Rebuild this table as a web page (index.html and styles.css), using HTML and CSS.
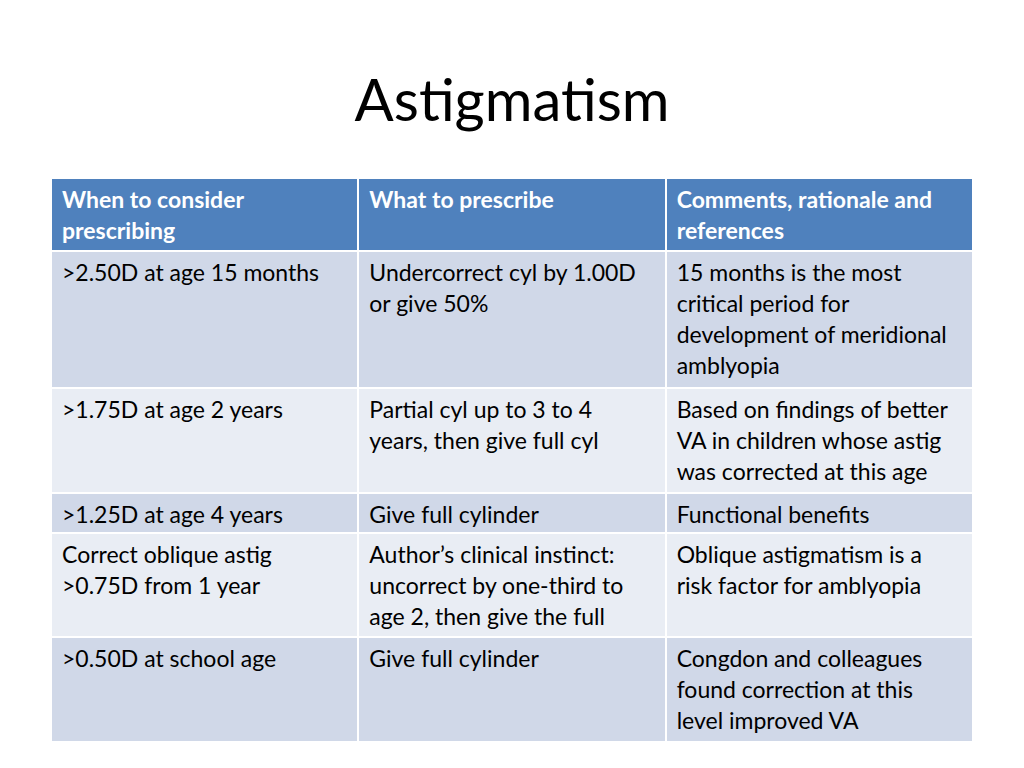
FILE: index.html
```html
<!DOCTYPE html>
<html>
<head>
<meta charset="utf-8">
<link rel="stylesheet" href="styles.css">
</head>
<body>
<div class="slide">
  <h1 class="title">Astigmatism</h1>
  <table class="grid">
    <tr class="head r-h">
      <th>When to consider<br>prescribing</th>
      <th>What to prescribe</th>
      <th>Comments, rationale and<br>references</th>
    </tr>
    <tr class="odd r1">
      <td>&gt;2.50D at age 15 months</td>
      <td>Undercorrect cyl by 1.00D<br>or give 50%</td>
      <td>15 months is the most<br>critical period for<br>development of meridional<br>amblyopia</td>
    </tr>
    <tr class="even r2">
      <td>&gt;1.75D at age 2 years</td>
      <td>Partial cyl up to 3 to 4<br>years, then give full cyl</td>
      <td>Based on findings of better<br>VA in children whose astig<br>was corrected at this age</td>
    </tr>
    <tr class="odd r3">
      <td>&gt;1.25D at age 4 years</td>
      <td>Give full cylinder</td>
      <td>Functional benefits</td>
    </tr>
    <tr class="even r4">
      <td>Correct oblique astig<br>&gt;0.75D from 1 year</td>
      <td>Author’s clinical instinct:<br>uncorrect by one-third to<br>age 2, then give the full</td>
      <td>Oblique astigmatism is a<br>risk factor for amblyopia</td>
    </tr>
    <tr class="odd r5">
      <td>&gt;0.50D at school age</td>
      <td>Give full cylinder</td>
      <td>Congdon and colleagues<br>found correction at this<br>level improved VA</td>
    </tr>
  </table>
</div>
</body>
</html>
```
FILE: styles.css
```css
html, body {
  margin: 0;
  padding: 0;
  background: #ffffff;
}
.slide {
  width: 1024px;
  height: 768px;
  font-family: Lato, "Open Sans", sans-serif;
  color: #000;
}
.title {
  margin: 0;
  height: 177px;
  box-sizing: border-box;
  padding-top: 64px;
  text-align: center;
  font-weight: 400;
  font-size: 58px;
  line-height: 70px;
}
.grid {
  margin-left: 50px;
  border-collapse: collapse;
  table-layout: fixed;
  width: 924px;
}
.grid th, .grid td {
  border: 2px solid #ffffff;
  width: 306px;
  box-sizing: border-box;
  padding: 5px 10px 0 10px;
  vertical-align: top;
  text-align: left;
  font-size: 23px;
  line-height: 31px;
  white-space: nowrap;
}
.grid th {
  background: #4f81bd;
  color: #ffffff;
  font-weight: 700;
}
.grid tr.odd td { background: #d0d8e8; }
.grid tr.even td { background: #e9edf4; }
.r-h { height: 73px; }
.r1 { height: 137px; }
.r2 { height: 105px; }
.r3 { height: 40px; }
.r4 { height: 104px; }
.r5 { height: 105px; }
```
